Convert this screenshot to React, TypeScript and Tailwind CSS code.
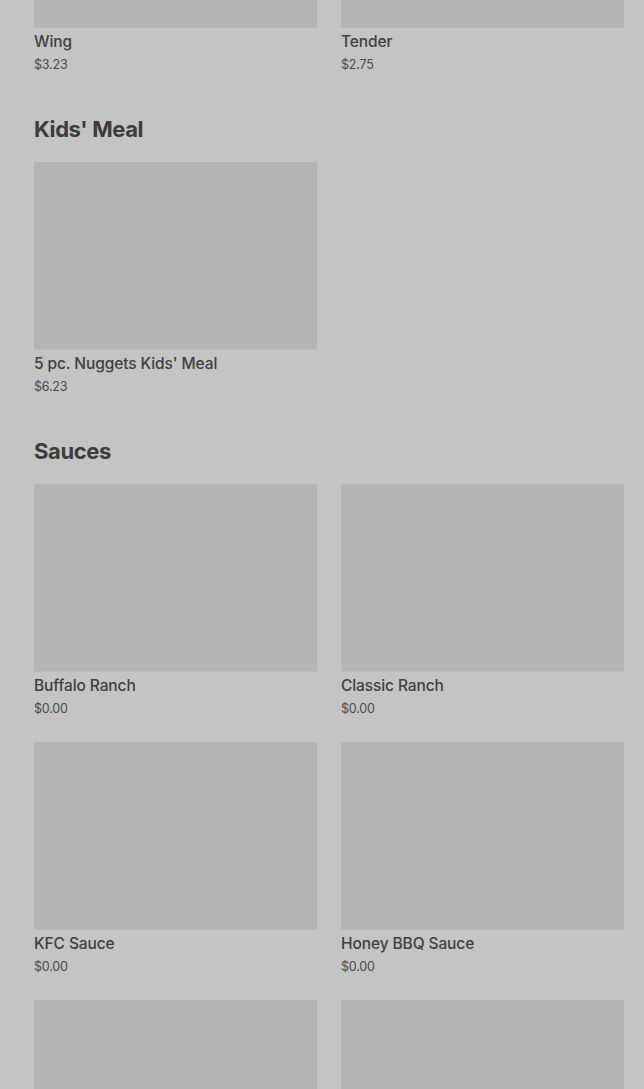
import React from "react";

type Item = { name?: string; price?: string };

const sections: { title?: string; items: Item[] }[] = [
  { items: [{ name: "Wing", price: "$3.23" }, { name: "Tender", price: "$2.75" }] },
  { title: "Kids' Meal", items: [{ name: "5 pc. Nuggets Kids' Meal", price: "$6.23" }] },
  {
    title: "Sauces",
    items: [
      { name: "Buffalo Ranch", price: "$0.00" },
      { name: "Classic Ranch", price: "$0.00" },
      { name: "KFC Sauce", price: "$0.00" },
      { name: "Honey BBQ Sauce", price: "$0.00" },
      {},
      {},
    ],
  },
];

function Card({ item }: { item: Item }) {
  return (
    <div className="flex flex-col">
      <div className="h-[188px] w-full bg-[#b5b5b5] border-b border-[#bababa]" />
      {item.name && (
        <>
          <div className="mt-[4px] text-[15.5px] leading-[20px] font-medium text-[#404040] tracking-[-0.1px]">
            {item.name}
          </div>
          <div className="mt-[3px] text-[12.5px] leading-[20px] text-[#4a4a4a] tracking-[-0.2px]">{item.price}</div>
        </>
      )}
    </div>
  );
}

export default function App() {
  return (
    <div
      className="w-[644px] h-[1089px] overflow-hidden bg-[#c4c4c4]"
      style={{ fontFamily: "Inter, 'Noto Sans', sans-serif" }}
    >
      <div className="-mt-[160px] pl-[34px] pr-[20px]">
        {sections.map((s, i) => (
          <section key={i}>
            {s.title && (
              <h2 className="pt-[38px] mb-[17px] text-[22px] leading-[32px] font-bold text-[#3c3c3c] tracking-[-0.4px]">
                {s.title}
              </h2>
            )}
            <div className="grid grid-cols-2 gap-x-6 gap-y-[23px]">
              {s.items.map((it, j) => (
                <Card key={j} item={it} />
              ))}
            </div>
          </section>
        ))}
      </div>
    </div>
  );
}
